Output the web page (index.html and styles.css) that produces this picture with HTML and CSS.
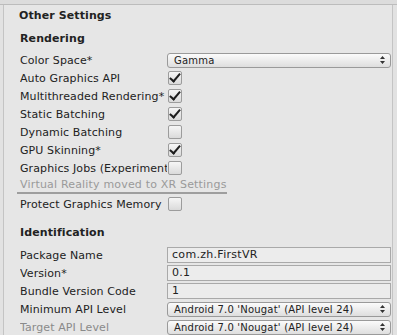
FILE: index.html
```html
<!DOCTYPE html>
<html lang="en">
<head>
    <meta charset="UTF-8">
    <title>Other Settings</title>
    <link rel="stylesheet" href="styles.css">
</head>
<body>
    <div class="top-strip"></div>
    <div class="panel">
        <div class="panel-title">Other Settings</div>

        <div class="section-title">Rendering</div>
        <div class="row">
            <div class="label">Color Space*</div>
            <div class="popup"><span>Gamma</span><svg class="arrows" width="5" height="8" viewBox="0 0 5 8"><path d="M2.5 0 L5 3 L0 3 Z M0 5 L5 5 L2.5 8 Z" fill="#333"/></svg></div>
        </div>
        <div class="row">
            <div class="label">Auto Graphics API</div>
            <span class="check on"></span>
        </div>
        <div class="row">
            <div class="label">Multithreaded Rendering*</div>
            <span class="check on"></span>
        </div>
        <div class="row">
            <div class="label">Static Batching</div>
            <span class="check on"></span>
        </div>
        <div class="row">
            <div class="label">Dynamic Batching</div>
            <span class="check"></span>
        </div>
        <div class="row">
            <div class="label">GPU Skinning*</div>
            <span class="check on"></span>
        </div>
        <div class="row">
            <div class="label">Graphics Jobs (Experimental)*</div>
            <span class="check"></span>
        </div>
        <div class="row">
            <div class="note-text">Virtual Reality moved to XR Settings</div>
        </div>
        <div class="row">
            <div class="label">Protect Graphics Memory</div>
            <span class="check"></span>
        </div>

        <div class="section-title ident">Identification</div>
        <div class="row">
            <div class="label">Package Name</div>
            <div class="field">com.zh.FirstVR</div>
        </div>
        <div class="row">
            <div class="label">Version*</div>
            <div class="field">0.1</div>
        </div>
        <div class="row">
            <div class="label">Bundle Version Code</div>
            <div class="field">1</div>
        </div>
        <div class="row">
            <div class="label">Minimum API Level</div>
            <div class="popup"><span>Android 7.0 'Nougat' (API level 24)</span><svg class="arrows" width="5" height="8" viewBox="0 0 5 8"><path d="M2.5 0 L5 3 L0 3 Z M0 5 L5 5 L2.5 8 Z" fill="#333"/></svg></div>
        </div>
        <div class="row">
            <div class="label disabled">Target API Level</div>
            <div class="popup"><span>Android 7.0 'Nougat' (API level 24)</span><svg class="arrows" width="5" height="8" viewBox="0 0 5 8"><path d="M2.5 0 L5 3 L0 3 Z M0 5 L5 5 L2.5 8 Z" fill="#333"/></svg></div>
        </div>
    </div>
</body>
</html>
```
FILE: styles.css
```css
body {
    margin: 0;
    background-color: #e2e2e2;
    font-family: "DejaVu Sans", sans-serif;
    font-size: 11px;
    letter-spacing: 0.1px;
    color: #222;
    width: 397px;
    height: 335px;
    overflow: hidden;
}
.top-strip {
    height: 4px;
    border-bottom: 1px solid #bcbcbc;
    background-color: #dcdcdc;
}
.panel {
    margin: 0 4px 0 3px;
    border-left: 1px solid #c4c4c4;
    border-right: 1px solid #c4c4c4;
    background-color: #e6e6e6;
    padding: 2px 1px 0 16px;
    height: 330px;
}
.panel-title {
    font-weight: bold;
    height: 18px;
    line-height: 18px;
    margin-left: -1px;
}
.section-title {
    font-weight: bold;
    margin-top: 5px;
    margin-bottom: 3px;
    height: 18px;
    line-height: 18px;
}
.section-title.ident {
    margin-top: 11px;
    margin-bottom: 4px;
}
.row {
    display: flex;
    align-items: center;
    height: 18px;
}
.label {
    width: 147px;
    flex-shrink: 0;
    white-space: nowrap;
    overflow: hidden;
}
.label.disabled {
    color: #8a8a8a;
}
.check {
    width: 12px;
    height: 12px;
    border: 1px solid #9c9c9c;
    border-radius: 2px;
    background: linear-gradient(#f6f6f6, #dadada);
    position: relative;
    margin-left: 1px;
}
.check.on::after {
    content: "";
    position: absolute;
    left: 3px;
    top: -1px;
    width: 4px;
    height: 9px;
    border-right: 2px solid #1e1e1e;
    border-bottom: 2px solid #1e1e1e;
    transform: rotate(40deg);
}
.popup {
    flex: 1;
    height: 13px;
    line-height: 13px;
    border: 1px solid #9a9a9a;
    border-radius: 3px;
    background: linear-gradient(#fbfbfb, #dedede);
    padding: 0 5px 0 6px;
    font-size: 10px;
    letter-spacing: 0.2px;
    display: flex;
    justify-content: space-between;
    align-items: center;
}
.field {
    flex: 1;
    height: 14px;
    line-height: 14px;
    border: 1px solid #a9a9a9;
    background-color: #ececec;
    padding: 0 4px;
    letter-spacing: 0.3px;
}
.note-text {
    color: #9a9a9a;
    border-bottom: 2px solid #9e9e9e;
    padding: 0 0 1px 3px;
    margin-left: -3px;
    white-space: nowrap;
    letter-spacing: 0.18px;
}
```
